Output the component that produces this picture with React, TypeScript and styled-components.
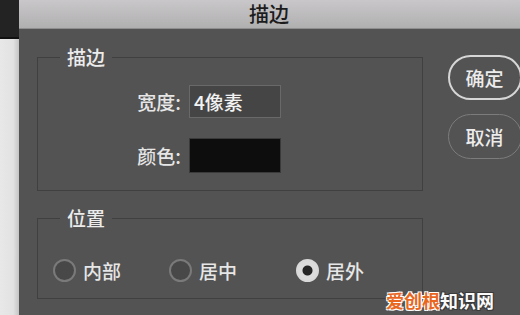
import styled, { createGlobalStyle } from 'styled-components';

const GlobalStyle = createGlobalStyle`
  html, body {
    margin: 0;
    padding: 0;
    width: 520px;
    height: 315px;
    overflow: hidden;
    background: #535353;
  }
  body {
    font-family: "Noto Sans CJK SC", "Noto Sans", sans-serif;
  }
`;

const positions = [
  { label: '内部', checked: false },
  { label: '居中', checked: false },
  { label: '居外', checked: true },
];

export default function App(): JSX.Element {
  return (
    <Screen>
      <GlobalStyle />
      <SideStrip>
        <SideTop />
        <SideBottom />
      </SideStrip>
      <Dialog>
        <TitleBar>描边</TitleBar>
        <Body>
          <Groups>
            <Group>
              <Legend>描边</Legend>
              <FieldGrid>
                <FieldLabel>宽度:</FieldLabel>
                <TextInput>4像素</TextInput>
                <FieldLabel>颜色:</FieldLabel>
                <Swatch $color="#0d0d0d" />
              </FieldGrid>
            </Group>
            <Group>
              <Legend>位置</Legend>
              <RadioRow>
                {positions.map((p) => (
                  <RadioItem key={p.label}>
                    <RadioDot $checked={p.checked} />
                    <span>{p.label}</span>
                  </RadioItem>
                ))}
              </RadioRow>
            </Group>
          </Groups>
          <Buttons>
            <PillButton $primary>确定</PillButton>
            <PillButton>取消</PillButton>
          </Buttons>
        </Body>
      </Dialog>
      <Watermark>
        <WatermarkAccent>爱创根</WatermarkAccent>知识网
      </Watermark>
    </Screen>
  );
}

const Screen = styled.div`
  position: relative;
  display: flex;
  width: 520px;
  height: 315px;
  overflow: hidden;
`;

const SideStrip = styled.div`
  width: 19px;
  flex-shrink: 0;
  display: flex;
  flex-direction: column;
`;

const SideTop = styled.div`
  height: 37px;
  background: #232323;
  border-bottom: 2px solid #111;
`;

const SideBottom = styled.div`
  flex: 1;
  background: linear-gradient(to right, #e8e8e8 0%, #e2e2e2 70%, #c4c4c4 100%);
`;

const Dialog = styled.div`
  flex: 1;
  display: flex;
  flex-direction: column;
  min-width: 0;
`;

const TitleBar = styled.div`
  height: 28px;
  border-bottom: 1px solid #8e8e8e;
  background: linear-gradient(to bottom, #c9c7c9, #b1b0b1);
  color: #1c1c1c;
  font-size: 20px;
  font-weight: 500;
  line-height: 28px;
  text-align: center;
  padding-right: 1px;
`;

const Body = styled.div`
  flex: 1;
  background: #535353;
  display: flex;
  padding: 18px 0 0 18px;
  gap: 25px;
  overflow: hidden;
`;

const Groups = styled.div`
  width: 386px;
  flex-shrink: 0;
  display: flex;
  flex-direction: column;
  gap: 17px;
`;

const Group = styled.fieldset`
  margin: 0;
  padding: 0;
  min-inline-size: 0;
  border: 1px solid #404040;
`;

const Legend = styled.legend`
  margin-left: 22px;
  padding: 0 7px;
  font-size: 19px;
  font-weight: 500;
  line-height: 20px;
  color: #ececec;
`;

const FieldGrid = styled.div`
  display: grid;
  grid-template-columns: 143px 92px;
  column-gap: 8px;
  row-gap: 20px;
  align-items: center;
  padding: 18px 0 17px;
`;

const FieldLabel = styled.div`
  text-align: right;
  font-size: 19px;
  font-weight: 500;
  color: #e6e6e6;
`;

const TextInput = styled.div`
  box-sizing: border-box;
  height: 33px;
  padding: 0 4px;
  background: #454545;
  border: 1px solid #696969;
  color: #f2f2f2;
  font-size: 19px;
  font-weight: 500;
  line-height: 31px;
`;

const Swatch = styled.div<{ $color: string }>`
  box-sizing: border-box;
  height: 35px;
  background: ${(p) => p.$color};
  border: 1px solid #3a3a3a;
`;

const RadioRow = styled.div`
  display: grid;
  grid-template-columns: 116px 127px auto;
  padding: 31px 0 16px 15px;
`;

const RadioItem = styled.label`
  display: flex;
  align-items: center;
  gap: 7px;
  font-size: 19px;
  font-weight: 500;
  line-height: 23px;
  color: #e6e6e6;
`;

const RadioDot = styled.span<{ $checked?: boolean }>`
  box-sizing: border-box;
  width: 23px;
  height: 23px;
  border-radius: 50%;
  flex-shrink: 0;
  border: 2px solid ${(p) => (p.$checked ? '#d9d9d9' : '#7a7a7a')};
  background: ${(p) =>
    p.$checked
      ? 'radial-gradient(circle, #262626 0 4.5px, #dcdcdc 5.5px)'
      : '#484848'};
`;

const Buttons = styled.div`
  display: flex;
  flex-direction: column;
  gap: 14px;
  padding-top: 8px;
  flex-shrink: 0;
`;

const PillButton = styled.div<{ $primary?: boolean }>`
  box-sizing: border-box;
  width: 74px;
  height: 45px;
  border-radius: 23px;
  border: ${(p) => (p.$primary ? '2px solid #d6d6d6' : '1.5px solid #7c7c7c')};
  display: flex;
  align-items: center;
  justify-content: center;
  font-size: 19px;
  font-weight: 500;
  color: #ececec;
  padding-right: 1px;
`;

const Watermark = styled.div`
  position: absolute;
  left: 386px;
  top: 288px;
  font-size: 18px;
  line-height: 24px;
  font-weight: 700;
  color: #fafafa;
  text-shadow:
    -1px -1px 0 #3a3a3a, 1px -1px 0 #3a3a3a,
    -1px 1px 0 #3a3a3a, 1px 1px 0 #3a3a3a;
`;

const WatermarkAccent = styled.span`
  color: #e8661e;
  text-shadow:
    -1px -1px 0 #fff, 1px -1px 0 #fff,
    -1px 1px 0 #fff, 1px 1px 0 #fff;
`;
